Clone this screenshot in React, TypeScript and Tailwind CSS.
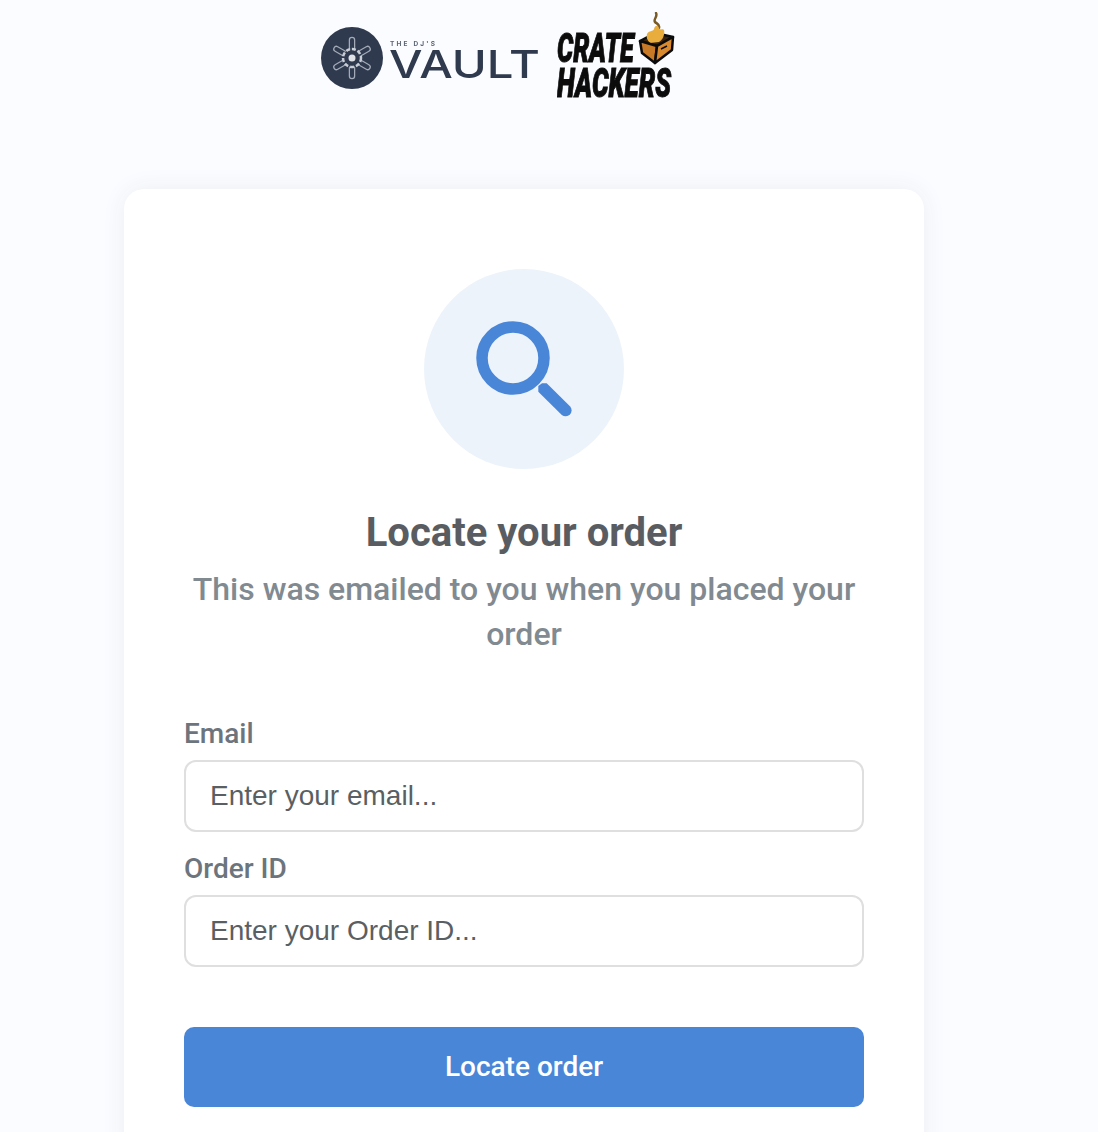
function VaultLogo() {
  const spokes = [0, 60, 120, 180, 240, 300];
  return (
    <svg width="220" height="66" viewBox="0 0 220 66" className="block blur-[0.5px]">
      <circle cx="31" cy="31" r="31" fill="#2f3a4e" />
      {spokes.map((a) => (
        <g key={a} transform={`rotate(${a} 31 31)`}>
          <path d="M31 21 L31 13" stroke="#a3abb8" strokeWidth="6.5" strokeLinecap="round" />
          <path d="M31 21 L31 13" stroke="#2f3a4e" strokeWidth="4" strokeLinecap="round" />
        </g>
      ))}
      <circle cx="31" cy="31" r="9" fill="#2f3a4e" stroke="#c9ced6" strokeWidth="2.5" strokeDasharray="4 2" />
      <circle cx="31" cy="31" r="3.5" fill="#dfe2e7" />
      <text x="69" y="19" fontFamily="Inter, sans-serif" fontSize="6.5" fontWeight="700" fill="#5a6273" textLength="45">
        THE DJ'S
      </text>
      <text x="68" y="51" fontFamily="Inter, sans-serif" fontSize="38.5" fontWeight="500" fill="#2f3a4e" textLength="151" lengthAdjust="spacingAndGlyphs">
        VAULT
      </text>
    </svg>
  );
}

function CrateLogo() {
  return (
    <svg width="118" height="88" viewBox="0 0 118 88" className="block blur-[0.5px]">
      <text transform="translate(0 50) scale(0.62 1)" fontFamily="Roboto, sans-serif" fontSize="41" fontWeight="900" fontStyle="italic" fill="#0c0c0c" stroke="#0c0c0c" strokeWidth="1">
        CRATE
      </text>
      <text transform="translate(0 85) scale(0.635 1)" fontFamily="Roboto, sans-serif" fontSize="41" fontWeight="900" fontStyle="italic" fill="#0c0c0c" stroke="#0c0c0c" strokeWidth="1">
        HACKERS
      </text>
      <path d="M83 29 L98 21 L116 25 L100 34 Z" fill="#3a2410" stroke="#0c0c0c" strokeWidth="2.5" strokeLinejoin="round" />
      {/* flame */}
      <path d="M99 1 C101 5 96 7 98 10 C100 12 103 12 102 16" fill="none" stroke="#7a5a25" strokeWidth="2.5" strokeLinecap="round" />
      <path d="M90 22 C92 18 96 20 97 17 C98 13 101 13 102 16 C103 19 106 16 107 18 C108 22 106 28 102 30 L93 31 C90 28 89 25 90 22 Z" fill="#e8ad3d" />
      <path d="M83 29 L100 34 L98 51 L85 41 Z" fill="#c97a26" stroke="#0c0c0c" strokeWidth="2.5" strokeLinejoin="round" />
      <path d="M100 34 L116 25 L115 38 L98 51 Z" fill="#d98a2e" stroke="#0c0c0c" strokeWidth="2.5" strokeLinejoin="round" />
      <path d="M104 37 L110 34" stroke="#0c0c0c" strokeWidth="1.5" />
    </svg>
  );
}

function Field({ label, placeholder }: { label: string; placeholder: string }) {
  return (
    <div>
      <label className="block text-[28px] leading-[32px] font-medium text-[#6c757d] mb-[10px]">{label}</label>
      <input
        placeholder={placeholder}
        className="block w-full h-[72px] px-[24px] bg-white border-2 border-[#dfdfdf] rounded-[12px] text-[28px] font-['Liberation_Sans',sans-serif] placeholder:text-[#5a5f63] outline-none"
      />
    </div>
  );
}

export default function App() {
  return (
    <div className="h-[1132px] overflow-hidden bg-[#fbfcff] font-['Roboto',sans-serif]">
      <header className="flex h-[189px] items-start pl-[321px]">
        <div className="pt-[27px]">
          <VaultLogo />
        </div>
        <div className="pt-[12px] ml-[16px]">
          <CrateLogo />
        </div>
      </header>
      <main className="w-[800px] ml-[124px] bg-white rounded-[20px] shadow-[0_0_24px_rgba(40,50,90,0.07)] px-[60px] pt-[80px] pb-[60px]">
        <div className="flex justify-center">
          <div className="w-[200px] h-[200px] rounded-full bg-[#ecf3fb] flex items-center justify-center">
            <svg width="100" height="100" viewBox="0 0 100 100" className="block" fill="none">
              <circle cx="39" cy="39" r="31" stroke="#4a86d8" strokeWidth="11.5" />
              <path d="M64.3 67 L68 64.3 L72.7 64.3 L96.2 87.5 A6 6 0 0 1 87.8 96 L64.3 72.7 Z" fill="#4a86d8" />
            </svg>
          </div>
        </div>
        <h1 className="mt-[40px] text-center text-[40px] leading-[48px] font-bold text-[#595d62]">Locate your order</h1>
        <p className="mt-[10px] text-center text-[32px] leading-[45px] font-medium text-[#818a91]">
          This was emailed to you when you placed your order
        </p>
        <form className="mt-[61px] flex flex-col gap-[21px]">
          <Field label="Email" placeholder="Enter your email..." />
          <Field label="Order ID" placeholder="Enter your Order ID..." />
          <button
            type="button"
            className="mt-[39px] h-[80px] w-full rounded-[10px] bg-[#4a86d8] text-white text-[28px] font-medium"
          >
            Locate order
          </button>
        </form>
      </main>
    </div>
  );
}
